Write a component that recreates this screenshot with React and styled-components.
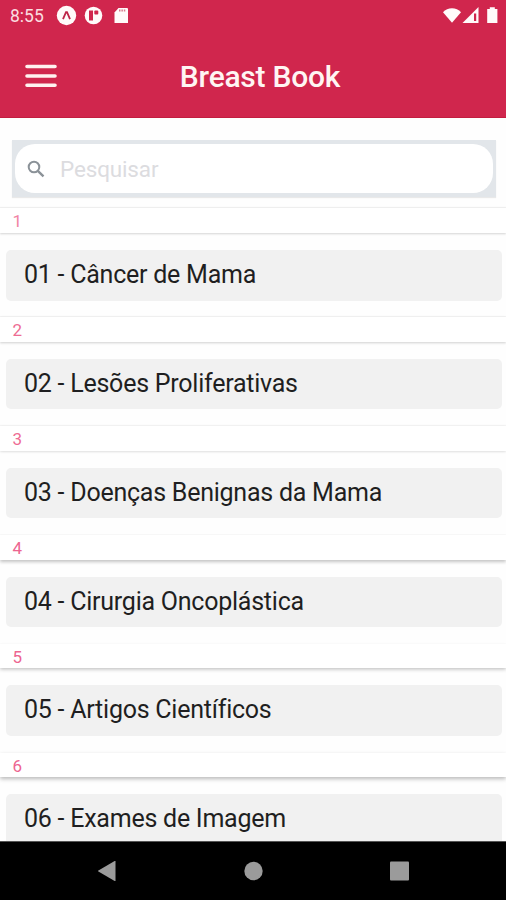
import React from "react";
import styled, { createGlobalStyle } from "styled-components";

const GlobalStyle = createGlobalStyle`
  * { box-sizing: border-box; }
  body { margin: 0; background: #fefefe; font-family: Roboto, sans-serif; }
`;

const Screen = styled.div`
  width: 506px;
  height: 900px;
  display: flex;
  flex-direction: column;
  overflow: hidden;
  background: #fefefe;
`;

const Header = styled.header`
  flex: none;
  height: 118px;
  background: #d0264d;
  color: #fff5f3;
  border-bottom: 1px solid #c21e40;
`;

const StatusBar = styled.div`
  height: 32px;
  display: flex;
  align-items: center;
  justify-content: space-between;
  padding: 0 8px 0 10px;
`;

const StatusGroup = styled.div`
  display: flex;
  align-items: center;
  height: 32px;
`;

const Clock = styled.span`
  width: 46px;
  font-size: 17.5px;
  line-height: 32px;
  color: #fbdde0;
`;

const TitleBar = styled.div`
  height: 86px;
  display: grid;
  grid-template-columns: 82px 1fr 68px;
  align-items: center;
  padding-top: 4px;
`;

const MenuButton = styled.button`
  display: flex;
  padding: 0 0 3px 25px;
  border: 0;
  background: none;
`;

const Title = styled.h1`
  margin: 0;
  text-align: center;
  font-size: 30px;
  letter-spacing: -0.25px;
  line-height: 36px;
  font-weight: 500;
  color: #fff5f3;
`;

const Content = styled.main`
  flex: 1;
  min-height: 0;
  overflow: hidden;
  padding-top: 22px;
`;

const SearchBar = styled.div`
  height: 57px;
  margin: 0 10px 11.3px 12px;
  padding: 4px 3px;
  background: #e2e6ea;
  box-shadow: 0 1px 1px #e9e9e9;
`;

const SearchField = styled.label`
  display: flex;
  align-items: center;
  height: 49px;
  padding: 0 12px;
  border-radius: 20px;
  background: #fff;
`;

const SearchInput = styled.input`
  flex: 1;
  min-width: 0;
  margin-left: 15px;
  padding: 1px 0 0;
  border: 0;
  outline: 0;
  background: none;
  font: 400 22.5px/28px Roboto, sans-serif;
  letter-spacing: -0.15px;
  color: #222;
  &::placeholder { color: #dcdcdf; opacity: 1; }
`;

const Section = styled.section`
  height: 108.85px;
`;

const SectionHeader = styled.h2`
  margin: 0 0 17px;
  height: 24.8px;
  padding: 1px 0 0 12.5px;
  font-size: 17px;
  line-height: 24px;
  font-weight: 400;
  color: ${(p) => p.$tone};
  background: #fff;
  box-shadow: 0 ${(p) => 1 + p.$depth * 0.2}px ${(p) => 2 + p.$depth * 0.4}px
      rgba(0, 0, 0, ${(p) => 0.17 + p.$depth * 0.02}),
    0 -1px 1px rgba(0, 0, 0, ${(p) => Math.max(0, 0.05 - p.$depth * 0.012)});
`;

const Card = styled.div`
  height: 50.5px;
  margin: 0 4.5px 0 6px;
  padding: 0 18px;
  border-radius: 5px;
  background: #f1f1f1;
  color: #1f1f21;
  font-size: 25px;
  letter-spacing: -0.24px;
  line-height: 49px;
  white-space: nowrap;
`;

const NavBar = styled.nav`
  flex: none;
  height: 59px;
  display: flex;
  justify-content: center;
  align-items: center;
  gap: 126px;
  padding-left: 1px;
  background: #000;
  border-top: 1px solid #555;
`;

const NavIcon = styled.svg`
  width: 20px;
  height: 20px;
  fill: #9b9b9b;
`;

const chapters = [
  { title: "01 - Câncer de Mama", tone: "#f184a4" },
  { title: "02 - Lesões Proliferativas", tone: "#ee6c93" },
  { title: "03 - Doenças Benignas da Mama", tone: "#ee6c93" },
  { title: "04 - Cirurgia Oncoplástica", tone: "#ed6590" },
  { title: "05 - Artigos Científicos", tone: "#ed6590" },
  { title: "06 - Exames de Imagem", tone: "#ed6590" },
];

const NotificationIcons = () => (
  <svg width="76" height="22" viewBox="0 0 76 22">
    <circle cx="10.5" cy="10.5" r="9.7" fill="#fffafa" />
    <path d="M7 14.2 L10 7.2 H11 L14 14.2" fill="none" stroke="#bd2548" strokeWidth="1.8" />
    <circle cx="37.5" cy="10.5" r="8.8" fill="#fffafa" />
    <path d="M33 5.5 H37 V15.5 H33 Z" fill="#d0264d" />
    <rect x="38.3" y="5.5" width="4" height="4" rx="1" fill="#d0264d" />
    <path d="M62.5 3 H71 Q72 3 72 4 V18 H58.5 V7.5 Z" fill="#fffafa" />
    <path d="M63 5.5 H69.5" stroke="#d8798c" strokeWidth="1.8" strokeDasharray="1.5 .9" />
  </svg>
);

const SystemIcons = () => (
  <svg width="58" height="22" viewBox="0 0 58 22">
    <path d="M3 7.3 C7.5 2 16.5 2 21 7.3 L12 17.7 Z" fill="#fffafa" />
    <path d="M38.5 2 V18 H22.5 Z" fill="#fffafa" />
    <rect x="34" y="8.5" width="2.2" height="7.5" fill="#d0264d" />
    <path d="M49.8 2.3 H54.8 V4 H57.4 V18 H47.2 V4 H49.8 Z" fill="#fffafa" />
  </svg>
);

export default function App() {
  return (
    <>
      <GlobalStyle />
      <Screen>
        <Header>
          <StatusBar>
            <StatusGroup>
              <Clock>8:55</Clock>
              <NotificationIcons />
            </StatusGroup>
            <SystemIcons />
          </StatusBar>
          <TitleBar>
            <MenuButton aria-label="Menu">
              <svg width="33" height="24" viewBox="0 0 33 24" stroke="#fff1f0" strokeWidth="3.6" strokeLinecap="round">
                <path d="M2 2.5H30M2 12H30M2 21.3H30" />
              </svg>
            </MenuButton>
            <Title>Breast Book</Title>
          </TitleBar>
        </Header>
        <Content>
          <SearchBar>
            <SearchField>
              <svg width="18" height="18" viewBox="0 0 18 18" fill="none" stroke="#8b9298" strokeWidth="2">
                <circle cx="7" cy="7" r="5.3" />
                <path d="M10.8 10.8 L16.5 16.3" strokeWidth="2.4" />
              </svg>
              <SearchInput placeholder="Pesquisar" />
            </SearchField>
          </SearchBar>
          {chapters.map((chapter, i) => (
            <Section key={chapter.title}>
              <SectionHeader $tone={chapter.tone} $depth={i}>{i + 1}</SectionHeader>
              <Card>{chapter.title}</Card>
            </Section>
          ))}
        </Content>
        <NavBar>
          <NavIcon viewBox="0 0 20 20"><path d="M17.5 -0.5V20.5L-0.5 10Z" /></NavIcon>
          <NavIcon viewBox="0 0 20 20"><circle cx="9.5" cy="10" r="9.2" /></NavIcon>
          <NavIcon viewBox="0 0 20 20"><rect x="0" y="0.5" width="19" height="19" rx="1" /></NavIcon>
        </NavBar>
      </Screen>
    </>
  );
}
